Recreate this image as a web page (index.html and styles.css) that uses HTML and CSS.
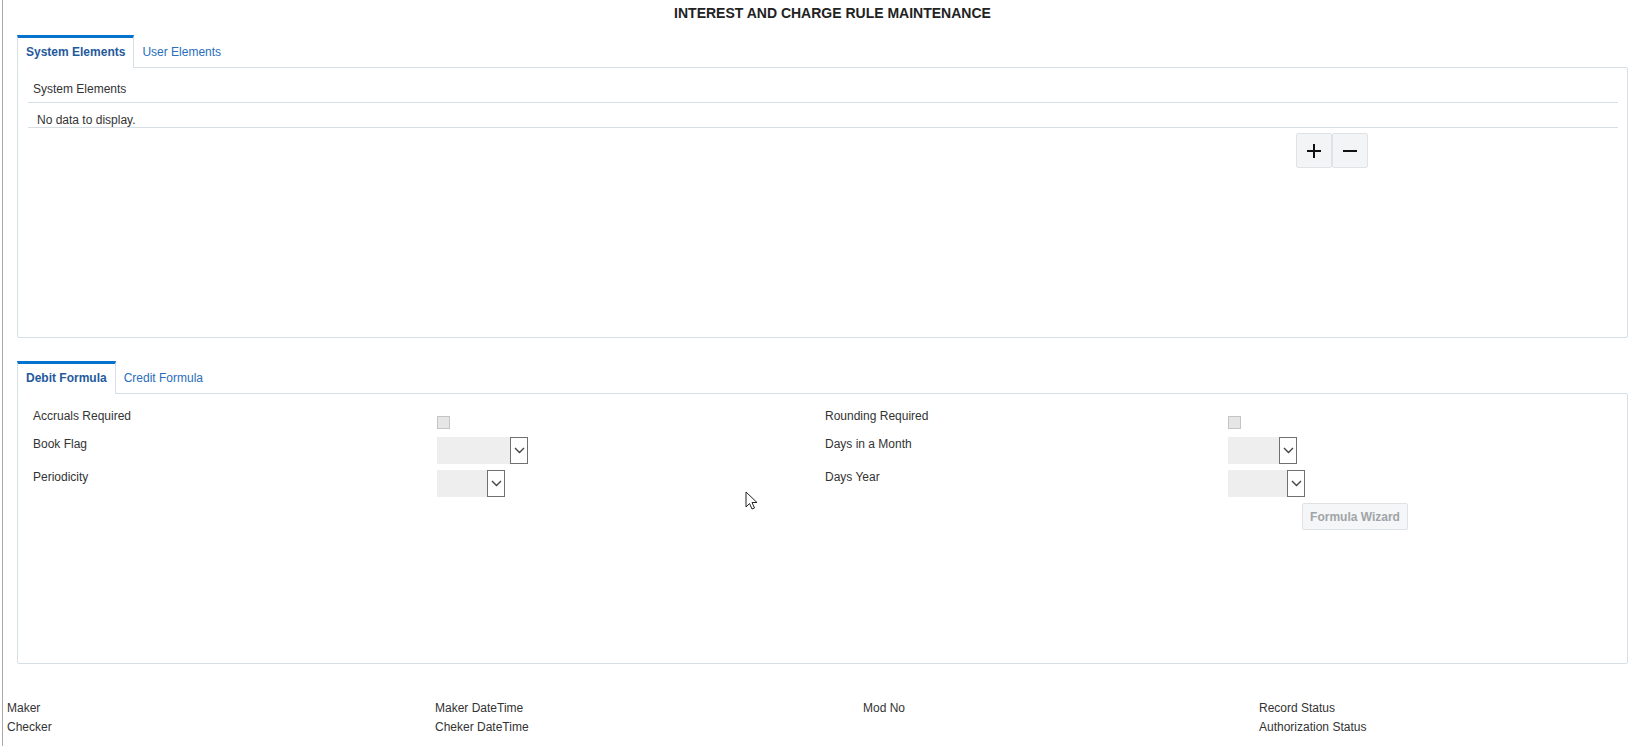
FILE: index.html
```html
<!DOCTYPE html>
<html>
<head>
    <title>Interest and Charge Rule Maintenance</title>
    <link rel="stylesheet" href="styles.css">
</head>
<body>
    <div class="page">
        <h1>INTEREST AND CHARGE RULE MAINTENANCE</h1>

        <div class="tabset">
            <div class="tabs">
                <div class="tab active">System Elements</div>
                <div class="tab">User Elements</div>
            </div>
            <div class="panel panel-elements">
                <div class="grid">
                    <div class="grid-head">System Elements</div>
                    <div class="grid-empty">No data to display.</div>
                </div>
                <div class="row-actions">
                    <button class="icon-btn" title="Add row">
                        <svg width="16" height="16" viewBox="0 0 16 16"><path d="M8 1v14M1 8h14" stroke="#111" stroke-width="2"/></svg>
                    </button>
                    <button class="icon-btn" title="Remove row">
                        <svg width="16" height="16" viewBox="0 0 16 16"><path d="M1 8h14" stroke="#111" stroke-width="2"/></svg>
                    </button>
                </div>
            </div>
        </div>

        <div class="tabset tabset-formula">
            <div class="tabs">
                <div class="tab active">Debit Formula</div>
                <div class="tab">Credit Formula</div>
            </div>
            <div class="panel panel-formula">
                <div class="form">
                    <div class="form-row row-check">
                        <label>Accruals Required</label>
                        <div class="field"><span class="checkbox"></span></div>
                        <label>Rounding Required</label>
                        <div class="field"><span class="checkbox"></span></div>
                    </div>
                    <div class="form-row">
                        <label>Book Flag</label>
                        <div class="field"><div class="select sel-book"><span class="sel-value"></span><span class="sel-arrow"><svg width="11" height="7" viewBox="0 0 11 7"><path d="M1 1l4.5 4.5L10 1" fill="none" stroke="#444" stroke-width="1.4"/></svg></span></div></div>
                        <label>Days in a Month</label>
                        <div class="field"><div class="select sel-month"><span class="sel-value"></span><span class="sel-arrow"><svg width="11" height="7" viewBox="0 0 11 7"><path d="M1 1l4.5 4.5L10 1" fill="none" stroke="#444" stroke-width="1.4"/></svg></span></div></div>
                    </div>
                    <div class="form-row">
                        <label>Periodicity</label>
                        <div class="field"><div class="select sel-period"><span class="sel-value"></span><span class="sel-arrow"><svg width="11" height="7" viewBox="0 0 11 7"><path d="M1 1l4.5 4.5L10 1" fill="none" stroke="#444" stroke-width="1.4"/></svg></span></div></div>
                        <label>Days Year</label>
                        <div class="field"><div class="select sel-year"><span class="sel-value"></span><span class="sel-arrow"><svg width="11" height="7" viewBox="0 0 11 7"><path d="M1 1l4.5 4.5L10 1" fill="none" stroke="#444" stroke-width="1.4"/></svg></span></div></div>
                    </div>
                    <div class="form-row row-button">
                        <span></span>
                        <span></span>
                        <span></span>
                        <div class="field"><button class="wizard" disabled>Formula Wizard</button></div>
                    </div>
                </div>
            </div>
        </div>

        <div class="audit">
            <span>Maker</span>
            <span>Maker DateTime</span>
            <span>Mod No</span>
            <span>Record Status</span>
            <span>Checker</span>
            <span>Cheker DateTime</span>
            <span></span>
            <span>Authorization Status</span>
        </div>

        <svg class="cursor" width="14" height="20" viewBox="0 0 14 20">
            <path d="M1 1v15l3.5-3.5 2.5 5.5 2.5-1-2.5-5.5h5z" fill="#fff" stroke="#222" stroke-width="1"/>
        </svg>
    </div>
</body>
</html>
```

FILE: styles.css
```css
body {
    font-family: "Liberation Sans", Arial, sans-serif;
    font-size: 12px;
    color: #333;
    margin: 0;
    background-color: white;
}
.page {
    position: relative;
    margin-left: 2px;
    border-left: 1px solid #a9a9a9;
    min-height: 746px;
    box-sizing: border-box;
}
h1 {
    margin: 0;
    padding: 5px 0 0 20px;
    font-size: 14px;
    line-height: 16px;
    font-weight: bold;
    text-align: center;
    color: #222;
}
.tabset {
    margin: 14px 14px 0 14px;
}
.tabset-formula {
    margin-top: 23px;
}
.tabs {
    display: flex;
    height: 32px;
}
.tab {
    padding: 0 8px;
    color: #2a6ebb;
    box-sizing: border-box;
    border-top: 3px solid transparent;
    line-height: 29px;
}
.tab.active {
    border-top-color: #0572ce;
    border-left: 1px solid #d6dfe6;
    border-right: 1px solid #d6dfe6;
    background-color: white;
    color: #245a9c;
    font-weight: bold;
    margin-bottom: -1px;
    height: 33px;
    position: relative;
}
.panel {
    border: 1px solid #d6dfe6;
    border-radius: 2px;
    box-sizing: border-box;
}
.panel-elements {
    height: 271px;
}
.panel-formula {
    height: 271px;
}
.grid {
    margin: 9px 9px 0 10px;
}
.grid-head {
    height: 25px;
    line-height: 25px;
    padding-left: 5px;
    border-bottom: 1px solid #d6dfe6;
}
.grid-empty {
    height: 25px;
    padding: 10px 0 0 9px;
    box-sizing: border-box;
    line-height: 14px;
    border-bottom: 1px solid #d6dfe6;
}
.row-actions {
    display: flex;
    margin: 5px 0 0 1278px;
}
.icon-btn {
    width: 36px;
    height: 35px;
    padding: 0;
    display: flex;
    align-items: center;
    justify-content: center;
    background-color: #f3f4f5;
    border: 1px solid #e0e3e6;
    border-radius: 2px;
}
.form {
    padding: 15px 0 0 15px;
}
.form-row {
    display: grid;
    grid-template-columns: 404px 388px 403px 1fr;
    height: 33px;
}
.row-check {
    height: 28px;
}
label {
    display: block;
    line-height: 14px;
    color: #333;
}
.checkbox {
    display: block;
    width: 11px;
    height: 11px;
    margin-top: 7px;
    background-color: #e6e6e6;
    border: 1px solid #c4c4c4;
}
.select {
    display: flex;
    height: 27px;
}
.sel-value {
    flex: 1;
    background-color: #eeeeee;
}
.sel-arrow {
    width: 18px;
    box-sizing: border-box;
    border: 1px solid #707070;
    background-color: white;
    display: flex;
    align-items: center;
    justify-content: center;
}
.sel-book {
    width: 91px;
}
.sel-period {
    width: 68px;
}
.sel-month {
    width: 69px;
}
.sel-year {
    width: 77px;
}
.wizard {
    margin-left: 74px;
    width: 106px;
    height: 27px;
    padding: 0;
    font-family: inherit;
    font-size: 12px;
    font-weight: bold;
    color: #a0a4a8;
    background-color: #f5f6f7;
    border: 1px solid #dfe2e5;
    border-radius: 2px;
}
.audit {
    position: absolute;
    left: 4px;
    top: 699px;
    display: grid;
    grid-template-columns: 428px 428px 396px 300px;
    line-height: 19px;
    color: #333;
}
.cursor {
    position: absolute;
    left: 742px;
    top: 491px;
}
```
